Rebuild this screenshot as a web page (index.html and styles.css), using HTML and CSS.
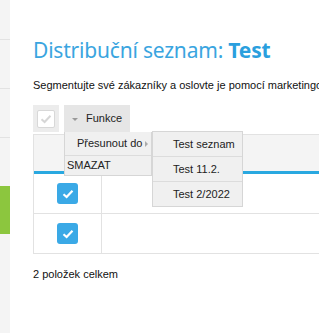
FILE: index.html
```html
<!DOCTYPE html>
<html>
<head>
<meta charset="utf-8">
<link rel="stylesheet" href="styles.css">
</head>
<body>
	<div class="page">
		<div class="sidebar">
			<div class="sideitem"></div>
			<div class="sideitem"></div>
			<div class="sideitem"></div>
			<div class="sideitem sidegap"></div>
			<div class="sideactive"></div>
		</div>
		<div class="main">
			<h1 class="title">Distribuční seznam: <b>Test</b></h1>
			<p class="lead">Segmentujte své zákazníky a oslovte je pomocí marketingových kampaní</p>

			<div class="toolbar">
				<div class="checkbtn">
					<span class="checkbox">
						<svg width="12" height="10" viewBox="0 0 12 10"><path d="M1.5 5.2 L4.6 8 L10.5 1.8" fill="none" stroke="#d6d6d6" stroke-width="2"/></svg>
					</span>
				</div>
				<div class="funkce">
					<span class="caret"></span>Funkce
					<div class="menu">
						<div class="menuitem move">Přesunout do<span class="subarrow"></span>
							<div class="submenu">
								<div class="subitem">Test seznam</div>
								<div class="subitem">Test 11.2.</div>
								<div class="subitem">Test 2/2022</div>
							</div>
						</div>
						<div class="menuitem delete">SMAZAT</div>
					</div>
				</div>
			</div>

			<div class="table">
				<div class="thead">
					<div class="cell first"></div>
					<div class="cell"></div>
				</div>
				<div class="trow">
					<div class="cell first"><span class="tick"><svg width="12" height="10" viewBox="0 0 12 10"><path d="M1.5 5.2 L4.6 8 L10.5 1.8" fill="none" stroke="#fff" stroke-width="2.2"/></svg></span></div>
					<div class="cell"></div>
				</div>
				<div class="trow">
					<div class="cell first"><span class="tick"><svg width="12" height="10" viewBox="0 0 12 10"><path d="M1.5 5.2 L4.6 8 L10.5 1.8" fill="none" stroke="#fff" stroke-width="2.2"/></svg></span></div>
					<div class="cell"></div>
				</div>
			</div>

			<p class="total">2 položek celkem</p>
		</div>
	</div>
</body>
</html>
```

FILE: styles.css
```css
body {
	margin: 0;
	font-family: "Liberation Sans", Arial, sans-serif;
	font-size: 11px;
	color: #222;
	overflow: hidden;
}
.page {
	display: flex;
	height: 333px;
}
.sidebar {
	width: 10px;
	flex-shrink: 0;
	background-color: #f4f4f4;
}
.sideitem {
	height: 48px;
	border-bottom: 1px solid #e2e2e2;
}
.sideitem:first-child {
	height: 39px;
}
.sidegap {
	border-bottom: none;
}
.sideactive {
	height: 48px;
	background-color: #8cc63e;
}
.main {
	flex: 1;
	padding-left: 23px;
	min-width: 0;
	white-space: nowrap;
}
.title {
	margin: 36px 0 0 0;
	font-family: "Noto Sans", sans-serif;
	font-size: 21px;
	font-weight: normal;
	color: #3aa5e0;
	line-height: 28px;
	letter-spacing: -0.2px;
}
.title b {
	font-weight: bold;
	color: #2a9fde;
}
.lead {
	margin: 14px 0 0 0;
	line-height: 14px;
	font-size: 11px;
	color: #111;
}
.toolbar {
	display: flex;
	gap: 5px;
	margin-top: 13px;
	height: 27px;
	position: relative;
	z-index: 2;
}
.checkbtn {
	width: 26px;
	height: 27px;
	background-color: #ececec;
	display: flex;
	align-items: center;
	justify-content: center;
}
.checkbox {
	width: 18px;
	height: 18px;
	box-sizing: border-box;
	background-color: #fff;
	border: 1px solid #d8d8d8;
	border-radius: 2px;
	display: flex;
	align-items: center;
	justify-content: center;
}
.funkce {
	position: relative;
	width: 66px;
	height: 27px;
	box-sizing: border-box;
	background-color: #e6e6e6;
	line-height: 27px;
	padding-left: 22px;
	font-size: 11px;
	color: #222;
}
.caret {
	position: absolute;
	left: 8px;
	top: 13px;
	border-left: 3px solid transparent;
	border-right: 3px solid transparent;
	border-top: 3px solid #999;
}
.menu {
	position: absolute;
	left: 0;
	top: 27px;
	width: 88px;
	background-color: #f0f0f0;
	border: 1px solid #d6d6d6;
	border-top: none;
	box-sizing: border-box;
	line-height: 22px;
}
.menuitem {
	position: relative;
	height: 23px;
	line-height: 23px;
	border-bottom: 1px solid #dcdcdc;
}
.menuitem.delete {
	height: 19px;
	line-height: 19px;
	border-bottom: none;
	padding-left: 2px;
}
.move {
	padding-left: 12px;
}
.subarrow {
	position: absolute;
	left: 80px;
	top: 9px;
	border-top: 3px solid transparent;
	border-bottom: 3px solid transparent;
	border-left: 3px solid #aaa;
}
.submenu {
	position: absolute;
	left: 87px;
	top: -1px;
	width: 91px;
	background-color: #f0f0f0;
	border: 1px solid #d6d6d6;
	box-sizing: border-box;
}
.subitem {
	height: 24px;
	line-height: 24px;
	padding-left: 20px;
	border-bottom: 1px solid #dcdcdc;
}
.subitem:last-child {
	border-bottom: none;
}
.table {
	margin-top: 2px;
	border-left: 1px solid #e2e2e2;
}
.thead {
	display: flex;
	height: 36px;
	background-color: #f4f4f4;
	border-top: 1px solid #e2e2e2;
	border-bottom: 3px solid #29a8e0;
}
.trow {
	display: flex;
	height: 39px;
	border-bottom: 1px solid #e2e2e2;
}
.cell {
	flex: 1;
}
.cell.first {
	flex: none;
	width: 67px;
	border-right: 1px solid #e2e2e2;
	display: flex;
	align-items: center;
	justify-content: center;
}
.thead .cell.first {
	border-right: none;
}
.tick {
	width: 21px;
	height: 21px;
	border-radius: 3px;
	background-color: #3aa9e6;
	display: flex;
	align-items: center;
	justify-content: center;
}
.total {
	margin: 14px 0 0 0;
	font-size: 11px;
	color: #111;
}
```
